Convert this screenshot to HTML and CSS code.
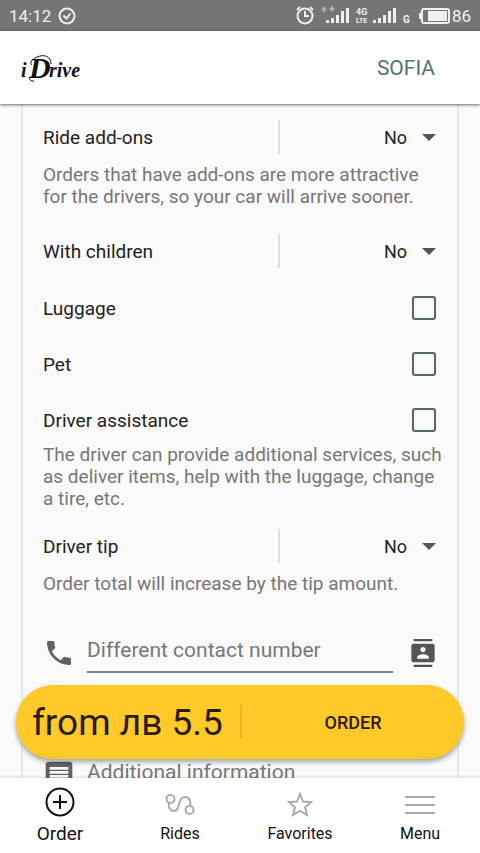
FILE: index.html
```html
<!DOCTYPE html>
<html lang="en">
<head>
<meta charset="utf-8">
<meta name="viewport" content="width=device-width, initial-scale=1">
<title>iDrive</title>
<link rel="stylesheet" href="styles.css">
</head>
<body>
<div class="app">
  <div class="status">
    <div class="status-group">
      <span>14:12</span>
      <svg class="status-check" width="18" height="18" viewBox="0 0 18 18" fill="none" stroke="currentColor" stroke-width="2"><circle cx="9" cy="9" r="7.5"/><path d="M5.5 8.5l3 3 4-5"/></svg>
    </div>
    <div class="status-group">
      <svg width="124" height="22" viewBox="0 0 124 22" fill="currentColor" aria-hidden="true">
        <g fill="none" stroke="currentColor" stroke-width="2"><circle cx="10" cy="11" r="7.500"/><path d="M10 6v5h4M2 5l3-3M15 2l3 3"/></g>
        <path opacity=".5" d="M29 1l3 4h-2v2h-2V5h-2zM37 7l-3-4h2V1h2v2h2z"/>
        <path d="M31 15h3v3h-3zM36 13h3v5h-3zM41 10h3v8h-3zM46 6h3v12h-3zM51 3h3v15h-3z"/>
        <text x="61" y="10" class="net-label">4G</text>
        <text x="61" y="18" class="net-sub">LTE</text>
        <path d="M78 15h3v3h-3zM83 13h3v5h-3zM88 10h3v8h-3zM93 6h3v12h-3zM98 3h3v15h-3z"/>
        <text x="108" y="18" class="net-type">G</text>
      </svg>
      <svg width="31" height="16" viewBox="0 0 31 16" aria-hidden="true"><rect x="3" y="1" width="27" height="14" rx="2" fill="none" stroke="currentColor" stroke-width="2"/><path fill="currentColor" d="M0 5h3v6H0zM9 3h19v10H9z"/></svg>
      <span class="battery">86</span>
    </div>
  </div>

  <header class="header">
    <svg class="logo" width="64" height="36" viewBox="0 0 64 36" role="img" aria-label="iDrive">
      <text x="1" y="27" class="logo-small">i</text>
      <text x="9" y="28" class="logo-cap">D</text>
      <text x="29" y="27" class="logo-small">rive</text>
      <path d="M12 27c-4 0-3 5 2 4M31 14c0-8-7-10-14-7-5 2-8 6-5 8" fill="none" stroke="currentColor" stroke-width="1"/>
    </svg>
    <a class="city" href="#city">SOFIA</a>
  </header>

  <main class="content">
    <form class="card" id="order">
      <div class="choice">
        <label for="addons">Ride add-ons</label>
        <div class="picker"><select id="addons"><option>No</option><option>Yes</option></select></div>
      </div>
      <p class="hint">Orders that have add-ons are more attractive for the drivers, so your car will arrive sooner.</p>
      <div class="choice after-hint">
        <label for="children">With children</label>
        <div class="picker"><select id="children"><option>No</option><option>Yes</option></select></div>
      </div>
      <div class="checks">
        <label class="check">Luggage <input type="checkbox"></label>
        <label class="check">Pet <input type="checkbox"></label>
        <label class="check">Driver assistance <input type="checkbox"></label>
      </div>
      <p class="hint">The driver can provide additional services, such as deliver items, help with the luggage, change a tire, etc.</p>
      <div class="choice after-checks">
        <label for="tip">Driver tip</label>
        <div class="picker"><select id="tip"><option>No</option><option>Yes</option></select></div>
      </div>
      <p class="hint">Order total will increase by the tip amount.</p>
      <div class="entry">
        <svg class="entry-icon" width="32" height="32" viewBox="0 0 24 24" fill="currentColor"><path d="M20 15.500c-1.250 0-2.450-.2-3.570-.57-.35-.11-.74-.03-1.020.24l-2.200 2.200c-2.830-1.440-5.150-3.750-6.590-6.590l2.200-2.210c.28-.26.36-.65.25-1C8.700 6.450 8.500 5.250 8.500 4c0-.55-.45-1-1-1H4c-.55 0-1 .45-1 1 0 9.390 7.610 17 17 17 .55 0 1-.45 1-1v-3.500c0-.55-.45-1-1-1z"/></svg>
        <input type="tel" aria-label="Different contact number" placeholder="Different contact number">
        <button class="contacts" type="button" aria-label="Choose contact"><svg width="28" height="28" viewBox="0 0 24 24" fill="currentColor"><path d="M20 0H4v2h16V0zM4 24h16v-2H4v2zM20 4H4c-1.100 0-2 .9-2 2v12c0 1.100.9 2 2 2h16c1.100 0 2-.9 2-2V6c0-1.100-.9-2-2-2zm-8 2.750c1.240 0 2.250 1.010 2.250 2.250s-1.010 2.250-2.250 2.250S9.750 10.240 9.750 9 10.760 6.750 12 6.750zM17 17H7v-1.500c0-1.670 3.330-2.500 5-2.500s5 .83 5 2.500V17z"/></svg></button>
      </div>
      <div class="entry entry-next">
        <svg class="entry-icon" width="32" height="32" viewBox="0 0 24 24" fill="currentColor"><path d="M21.990 4c0-1.100-.89-2-1.990-2H4c-1.100 0-2 .9-2 2v12c0 1.100.9 2 2 2h14l4 4-.01-18zM19 14H5v-2h14v2zm0-3H5V9h14v2zm0-3H5V6h14v2z"/></svg>
        <input type="text" aria-label="Additional information" placeholder="Additional information">
      </div>
    </form>
  </main>

  <div class="bottom">
    <div class="order-bar">
      <span class="price">from лв 5.5</span>
      <button class="order-button" type="submit" form="order">ORDER</button>
    </div>
    <nav class="tabs">
      <a class="tab active" href="#order">
        <svg width="32" height="32" viewBox="0 0 32 32" fill="none" stroke="currentColor" stroke-width="2"><circle cx="16" cy="16" r="13.500"/><path d="M16 9v14M9 16h14"/></svg>
        Order</a>
      <a class="tab" href="#rides">
        <svg width="32" height="32" viewBox="0 0 32 32" fill="none" stroke="currentColor" stroke-width="2"><circle cx="6.500" cy="13" r="4"/><circle cx="25.500" cy="24" r="4"/><path d="M5 17c-1 4 1 8 5 8 7 0 3-14 11-14 5 0 6 5 5 9"/></svg>
        Rides</a>
      <a class="tab" href="#favorites">
        <svg width="32" height="32" viewBox="0 0 32 32" fill="none" stroke="currentColor" stroke-width="2"><path d="M16 8l3 7.500 8 .6-6 5.200 2 7.700-7-4.200L9 29l2-7.700-6-5.200 8-.6z"/></svg>
        Favorites</a>
      <a class="tab" href="#menu">
        <svg width="32" height="32" viewBox="0 0 32 32" fill="none" stroke="currentColor" stroke-width="2"><path d="M1 11h30M1 19h30M1 27h30"/></svg>
        Menu</a>
    </nav>
  </div>
</div>
</body>
</html>
```
FILE: styles.css
```css
* { box-sizing: border-box; }
body {
  margin: 0;
  font-family: Roboto, "Liberation Sans", sans-serif;
  font-size: 19px;
  color: #222;
  background: #fafafa;
}
input, select, button { font: inherit; color: inherit; }
svg { flex: none; }
.app { display: flex; flex-direction: column; height: 100vh; }

.status {
  display: flex;
  flex: none;
  justify-content: space-between;
  align-items: center;
  height: 31px;
  padding: 0 9px;
  background: #757575;
  color: #f0f0f0;
  font-size: 17px;
}
.status-group { display: flex; align-items: center; }
.status-check { margin-left: 7px; }
.battery { margin-left: 2px; }
.net-label { font-size: 9px; font-weight: 700; }
.net-sub { font-size: 7px; font-weight: 700; }
.net-type { font-size: 10px; font-weight: 700; }

.header {
  display: flex;
  flex: none;
  position: relative;
  justify-content: space-between;
  align-items: center;
  height: 73px;
  padding: 0 45px 0 20px;
  background: #fff;
  box-shadow: 0 1px 3px rgba(0, 0, 0, .6);
}
.logo { color: #111; fill: currentColor; }
.logo-small { font: italic 700 20px "Liberation Serif", serif; }
.logo-cap { font: italic 700 30px "Liberation Serif", serif; }
.city { color: #52736f; font-size: 21px; text-decoration: none; }

.content { flex: 1; min-height: 0; overflow-y: auto; scrollbar-width: none; }
.card {
  margin: 0 21px;
  padding: 6px 20px 120px;
  border: solid #e3eeeb;
  border-width: 0 2px;
}
.choice { display: flex; justify-content: space-between; align-items: center; height: 54px; }
.picker {
  position: relative;
  width: 40%;
  min-width: 159px;
  border-left: 2px solid #dedede;
}
.picker::after {
  content: "";
  position: absolute;
  top: 14px;
  right: 1px;
  border: solid transparent;
  border-width: 7px 7px 0;
  border-top-color: #555;
  pointer-events: none;
}
.picker select {
  display: block;
  appearance: none;
  width: 100%;
  height: 34px;
  padding: 0 30px 0 0;
  border: 0;
  background: none;
  font-size: 18px;
  text-align: right;
  text-align-last: right;
}
.hint { margin: 0 -8px 0 0; color: #777; line-height: 22px; }
.after-hint { margin-top: 16px; }
.after-checks { margin-top: 9px; }
.checks { display: flex; flex-direction: column; gap: 8px; margin-top: 6px; }
.check { display: flex; justify-content: space-between; align-items: center; height: 48px; }
.check input {
  appearance: none;
  width: 24px;
  height: 24px;
  margin: 0 1px 0 0;
  border: 2px solid #54656f;
  border-radius: 3px;
}
.entry { display: flex; align-items: center; margin-top: 34px; }
.entry-icon { margin-top: 4px; color: #636363; }
.entry input {
  flex: 1;
  min-width: 0;
  height: 44px;
  margin: 0 16px 0 12px;
  padding: 0;
  border: 0;
  border-bottom: 2px solid #75858f;
  border-radius: 0;
  background: none;
  font-size: 21px;
}
.entry input::placeholder { color: #777; opacity: 1; }
.entry-next { margin-top: 78px; }
.contacts {
  display: flex;
  margin-top: 4px;
  padding: 0;
  border: 0;
  background: none;
  color: #555;
}

.bottom { position: relative; flex: none; }
.order-bar {
  position: absolute;
  right: 16px;
  bottom: 100%;
  left: 16px;
  display: flex;
  align-items: center;
  height: 74px;
  margin-bottom: 19px;
  border-radius: 37px;
  background: #ffca28;
  color: #2b1a08;
  box-shadow: 0 3px 5px rgba(0, 0, 0, .35);
}
.price { width: 50%; padding-left: 16px; font-size: 37px; white-space: nowrap; }
.order-button {
  width: 50%;
  height: 34px;
  padding: 0;
  border: 0;
  border-left: 2px solid #e5b727;
  background: none;
  font-size: 18px;
  font-weight: 500;
}
.tabs {
  display: grid;
  grid-template-columns: repeat(4, 1fr);
  height: 75px;
  padding-top: 8px;
  background: #fff;
  box-shadow: 0 -1px 3px rgba(0, 0, 0, .12);
}
.tab {
  display: flex;
  flex-direction: column;
  align-items: center;
  gap: 5px;
  color: #111;
  font-size: 16px;
  line-height: 22px;
  text-decoration: none;
}
.tab svg { color: #aaa; }
.active { font-size: 19px; }
.active svg { color: #111; }
```
